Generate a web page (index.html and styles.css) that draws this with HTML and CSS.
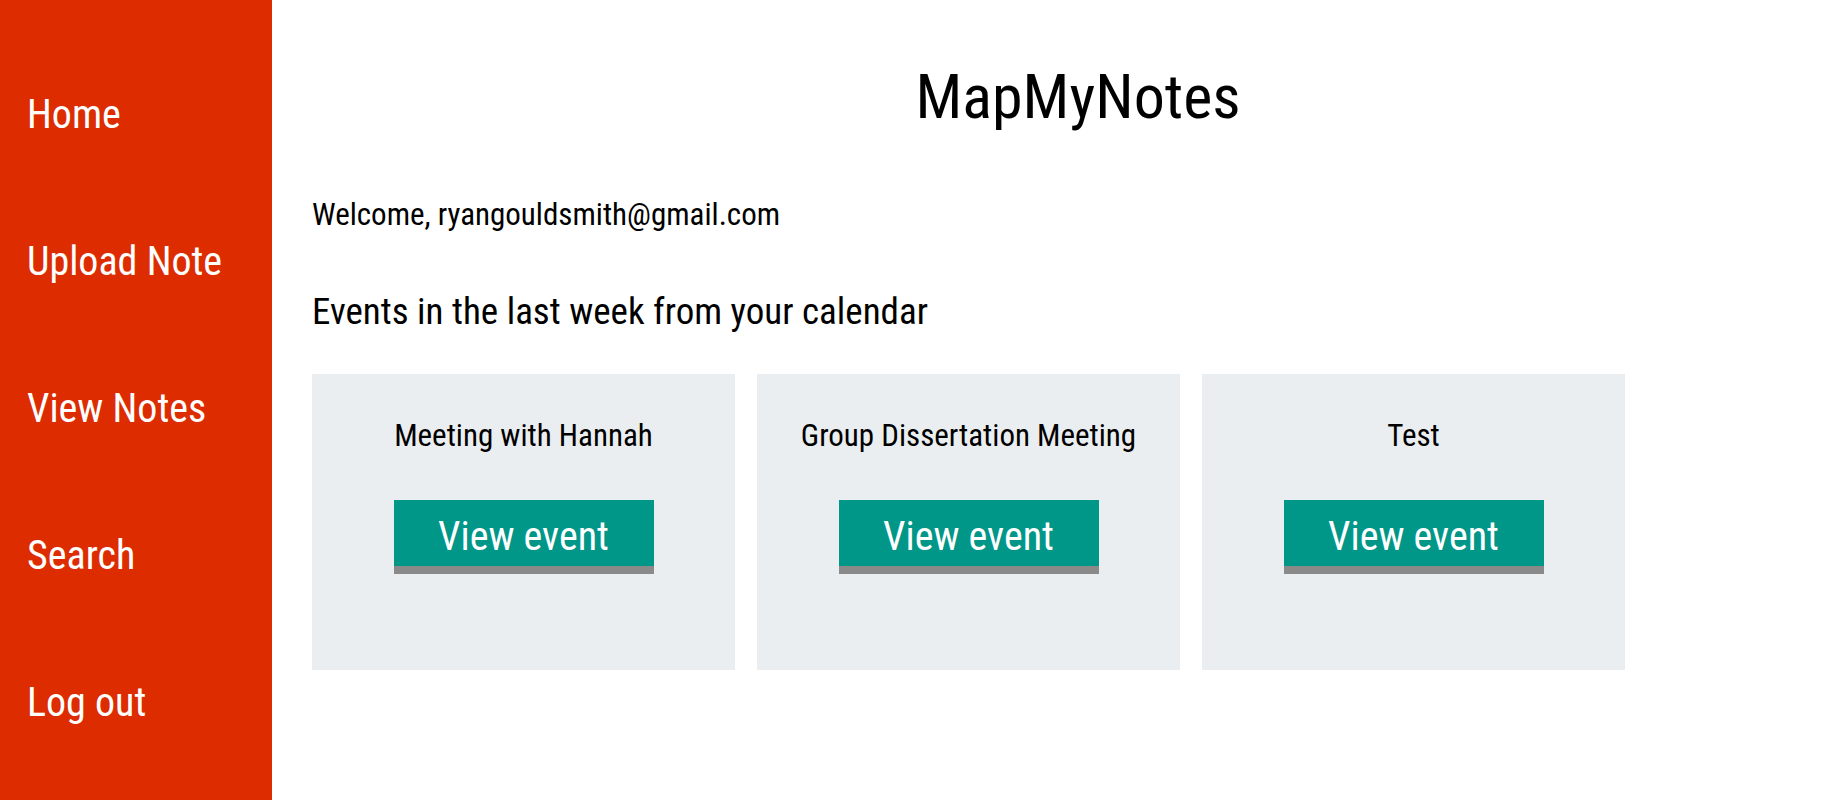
FILE: index.html
```html
<!DOCTYPE html>
<html lang="en">
<head>
<meta charset="utf-8">
<title>MapMyNotes</title>
<link rel="stylesheet" href="styles.css">
</head>
<body>
<div class="layout">
  <nav class="sidebar">
    <a class="nav-link" href="#">Home</a>
    <a class="nav-link" href="#">Upload Note</a>
    <a class="nav-link" href="#">View Notes</a>
    <a class="nav-link" href="#">Search</a>
    <a class="nav-link" href="#">Log out</a>
  </nav>
  <main class="main">
    <h1 class="title">MapMyNotes</h1>
    <p class="welcome">Welcome, ryangouldsmith@gmail.com</p>
    <h2 class="section-title">Events in the last week from your calendar</h2>
    <div class="cards">
      <div class="card">
        <div class="card-title">Meeting with Hannah</div>
        <a class="btn" href="#">View event</a>
      </div>
      <div class="card">
        <div class="card-title">Group Dissertation Meeting</div>
        <a class="btn" href="#">View event</a>
      </div>
      <div class="card">
        <div class="card-title">Test</div>
        <a class="btn" href="#">View event</a>
      </div>
    </div>
  </main>
</div>
</body>
</html>
```
FILE: styles.css
```css
html, body {
  margin: 0;
  padding: 0;
  height: 100%;
}
body {
  font-family: "Roboto Condensed", "Liberation Sans", sans-serif;
  color: #000;
  background: #fff;
}
.layout {
  display: flex;
  min-height: 100vh;
}
.sidebar {
  width: 272px;
  flex: 0 0 272px;
  background: #dd2c00;
  display: flex;
  flex-direction: column;
  padding-top: 41px;
  box-sizing: border-box;
}
.nav-link {
  display: block;
  color: #fff;
  text-decoration: none;
  font-size: 40px;
  line-height: 147px;
  padding-left: 27px;
}
.main {
  flex: 1;
  padding: 0 0 0 40px;
}
.title {
  margin: 60px 0 0;
  font-size: 62px;
  font-weight: normal;
  text-align: center;
  line-height: normal;
}
.welcome {
  margin: 63px 0 0;
  font-size: 31px;
  line-height: normal;
}
.section-title {
  margin: 57px 0 0;
  font-size: 37px;
  font-weight: normal;
  line-height: normal;
}
.cards {
  display: flex;
  gap: 22px;
  margin-top: 41px;
}
.card {
  width: 423px;
  height: 296px;
  background: #ebeef1;
  box-sizing: border-box;
  padding-top: 43px;
  display: flex;
  flex-direction: column;
  align-items: center;
}
.card-title {
  font-size: 31px;
  line-height: normal;
  text-align: center;
}
.btn {
  margin-top: 46px;
  width: 260px;
  box-sizing: border-box;
  background: #009688;
  border-bottom: 8px solid #8a8a8a;
  color: #fff;
  text-decoration: none;
  text-align: center;
  font-size: 40px;
  line-height: 59px;
  padding-top: 7px;
}
```
